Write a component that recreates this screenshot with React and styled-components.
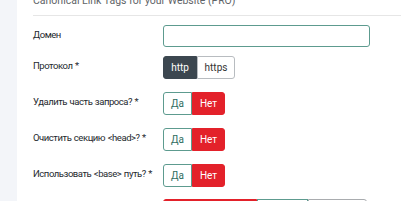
import React from "react";
import styled, { createGlobalStyle } from "styled-components";

const GlobalStyle = createGlobalStyle`
  html, body {
    margin: 0;
    padding: 0;
    background: #f3f5f9;
    font-family: Roboto, "Liberation Sans", sans-serif;
    overflow: hidden;
  }
`;

const Page = styled.div`
  display: flex;
  height: 201px;
  overflow: hidden;
`;

const Side = styled.div`
  width: 17px;
  flex-shrink: 0;
  background: #f3f5f9;
`;

const Panel = styled.div`
  flex: 1;
  background: #fff;
  padding-left: 16px;
`;

const Title = styled.div`
  margin-top: -8px;
  height: 23px;
  line-height: 18px;
  font-size: 10.5px;
  color: #5f6468;
  white-space: nowrap;
  border-bottom: 1px solid #e6e6e6;
`;

const Form = styled.div`
  padding-top: 9px;
`;

const Row = styled.div`
  display: flex;
  align-items: center;
  height: ${(p) => (p.$h ? p.$h : 23)}px;
  margin-bottom: ${(p) => (p.$gap ? p.$gap : 13)}px;
`;

const Label = styled.div`
  width: 130px;
  flex-shrink: 0;
  font-size: 9.5px;
  letter-spacing: -0.45px;
  word-spacing: 0.6px;
  color: #24292e;
  white-space: nowrap;
  margin-top: ${(p) => (p.$up ? -4 : 0)}px;
`;

const Input = styled.input`
  box-sizing: border-box;
  width: 207px;
  height: 22px;
  border: 1px solid #5d9b8f;
  border-radius: 3px;
  outline: none;
`;

const Group = styled.div`
  display: flex;
  height: 23px;
`;

const Btn = styled.div`
  box-sizing: border-box;
  height: 23px;
  width: ${(p) => p.$w}px;
  display: flex;
  align-items: center;
  justify-content: center;
  font-size: 10px;
  border: 1px solid ${(p) => p.$border};
  background: ${(p) => p.$bg};
  color: ${(p) => p.$color};
  &:first-child {
    border-radius: 3px 0 0 3px;
  }
  &:last-child {
    border-radius: 0 3px 3px 0;
  }
`;

const styles = {
  dark: { $bg: "#3c4750", $border: "#3c4750", $color: "#fff" },
  light: { $bg: "#fff", $border: "#b8bcc0", $color: "#333" },
  yes: { $bg: "#fff", $border: "#5d9b8f", $color: "#2f6d60" },
  no: { $bg: "#e3212a", $border: "#e3212a", $color: "#fff" },
  grey: { $bg: "#fff", $border: "#a9acaf", $color: "#333" },
};

const YesNo = () => (
  <Group>
    <Btn $w={29} {...styles.yes}>Да</Btn>
    <Btn $w={33} {...styles.no}>Нет</Btn>
  </Group>
);

export default function App() {
  return (
    <>
      <GlobalStyle />
      <Page>
        <Side />
        <Panel>
          <Title>Canonical Link Tags for your Website (PRO)</Title>
          <Form>
            <Row $h={22} $gap={9}>
              <Label $up>Домен</Label>
              <Input />
            </Row>
            <Row>
              <Label $up>Протокол *</Label>
              <Group>
                <Btn $w={34} {...styles.dark}>http</Btn>
                <Btn $w={38} {...styles.light}>https</Btn>
              </Group>
            </Row>
            <Row>
              <Label $up>Удалить часть запроса? *</Label>
              <YesNo />
            </Row>
            <Row>
              <Label $up>Очистить секцию &lt;head&gt;? *</Label>
              <YesNo />
            </Row>
            <Row $gap={12}>
              <Label $up>Использовать &lt;base&gt; путь? *</Label>
              <YesNo />
            </Row>
            <Row>
              <Label />
              <Group>
                <Btn $w={94} {...styles.no}>Нет</Btn>
                <Btn $w={51} {...styles.yes}>Да</Btn>
                <Btn $w={59} {...styles.grey}>Авто</Btn>
              </Group>
            </Row>
          </Form>
        </Panel>
      </Page>
    </>
  );
}
